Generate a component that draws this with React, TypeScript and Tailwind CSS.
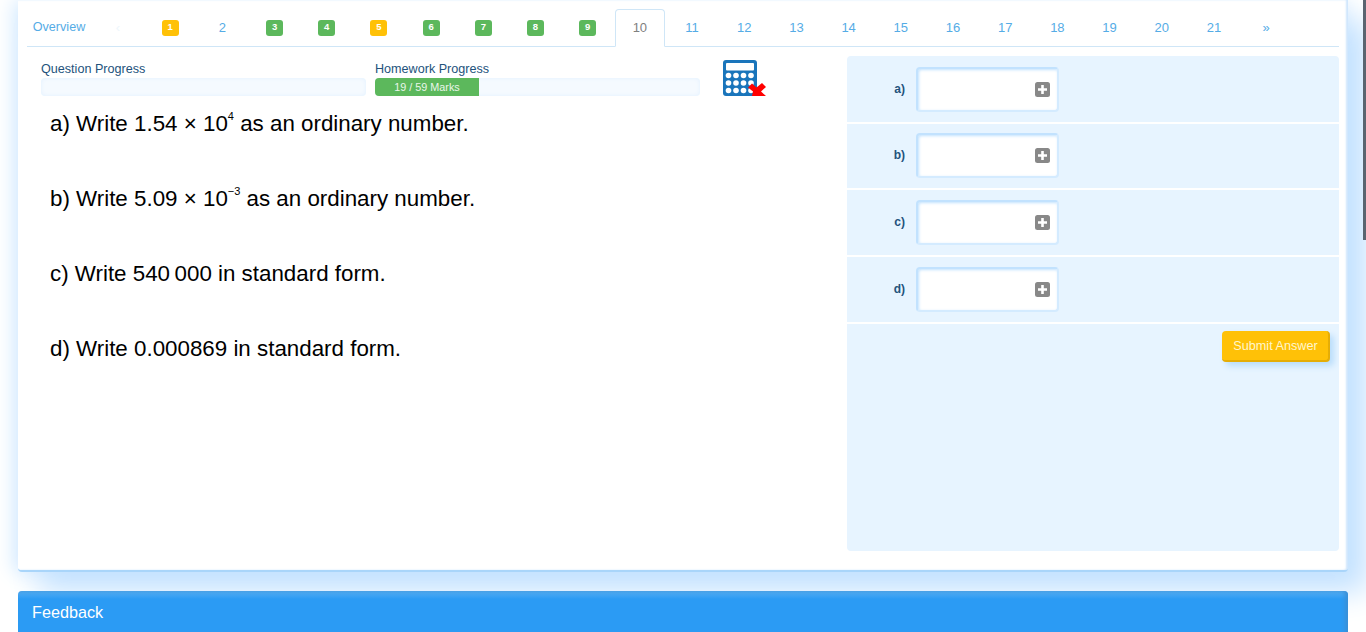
const tabs = [
  { label: "1", badge: "yellow" },
  { label: "2" },
  { label: "3", badge: "green" },
  { label: "4", badge: "green" },
  { label: "5", badge: "yellow" },
  { label: "6", badge: "green" },
  { label: "7", badge: "green" },
  { label: "8", badge: "green" },
  { label: "9", badge: "green" },
  { label: "10", active: true },
  ...[11, 12, 13, 14, 15, 16, 17, 18, 19, 20, 21].map((n) => ({ label: String(n) })),
  { label: "»" },
];

const answers = [
  { label: "a)", row: "h-[68px] pt-[11px]" },
  { label: "b)", row: "h-[66px] pt-[9px]" },
  { label: "c)", row: "h-[67px] pt-[10px]" },
  { label: "d)", row: "h-[67px] pt-[10px]" },
];

function Tab({ tab }: { tab: { label: string; badge?: string; active?: boolean } }) {
  if (tab.active) {
    return (
      <div className="mr-[2.2px] -mb-px flex h-[38px] w-[50px] items-center justify-center rounded-t border border-[#cfe6f7] border-b-white bg-white text-[13px] text-[#808080]">
        {tab.label}
      </div>
    );
  }
  return (
    <div className="mr-[2.2px] flex h-[37px] w-[50px] items-center justify-center text-[13px] text-[#55ace6]">
      {tab.badge ? (
        <span
          className={
            "flex h-4 w-[17px] items-center justify-center rounded-[3px] text-[9.5px] font-bold text-white " +
            (tab.badge === "yellow" ? "bg-[#ffc107]" : "bg-[#5cb85c]")
          }
        >
          {tab.label}
        </span>
      ) : (
        tab.label
      )}
    </div>
  );
}

function Progress({ label, children }: { label: string; children?: React.ReactNode }) {
  return (
    <div className="mt-[3px] w-[325px]">
      <div className="h-[19px] text-[12.6px] leading-[21px] text-[#23527c]">{label}</div>
      <div className="h-[18px] overflow-hidden rounded bg-[#f5faff] shadow-[inset_0_0_4px_#e2f1ff]">{children}</div>
    </div>
  );
}

function CalculatorIcon() {
  return (
    <svg width="43" height="36" viewBox="0 0 43 36" className="block">
      <rect x="0" y="0" width="34" height="36" rx="3" fill="#1a75bb" />
      <rect x="3" y="3" width="28" height="7.5" rx="1" fill="#fff" />
      {[15.5, 23, 30.5].map((cy) =>
        [5.5, 13, 20.5, 28].map((cx) => <circle key={`${cx}-${cy}`} cx={cx} cy={cy} r="2.8" fill="#fff" />),
      )}
      <path d="M25 27.5 L29 23.5 L33.5 27.5 L39 23 L43 27 L38 31.5 L43 36 L29 36 L30 31.5 Z" fill="#f00" />
    </svg>
  );
}

function Question({ children }: { children: React.ReactNode }) {
  return <p className="h-[75px] text-[22.35px] leading-[30px] text-black">{children}</p>;
}

function Exp({ children }: { children: React.ReactNode }) {
  return <sup className="relative -top-[3px] align-super text-[11px] leading-none">{children}</sup>;
}

export default function App() {
  return (
    <div className="relative h-[632px] overflow-hidden bg-white font-['Liberation_Sans',Arial,sans-serif]">
      {/* scrollbar thumb */}
      <div className="absolute right-0 top-0 z-10 h-[240px] w-[3px] bg-[#5a6470]" />

      <div className="ml-[18px] h-[572px] w-[1330px] rounded-b border-b-2 border-[#a9d5fa] bg-white px-[9px] pt-[9px] shadow-[20px_20px_30px_#c4e2ff,-4px_0_20px_#d2e9ff,inset_-2px_0_2px_#cfe6fd]">
        <div className="flex h-[38px] items-start border-b border-[#cfe6f7]">
          <div className="mr-[2px] flex h-[37px] w-[64px] items-center justify-center text-[12.6px] text-[#55ace6]">
            Overview
          </div>
          <div className="mr-[2.2px] flex h-[37px] w-[50px] items-center justify-center text-[13px] text-[#eef6fc]">‹</div>
          {tabs.map((tab) => (
            <Tab key={tab.label} tab={tab} />
          ))}
        </div>

        <div className="flex pt-[9px]">
          <div className="w-[820px] pl-[14px]">
            <div className="flex items-start gap-[9px]">
              <Progress label="Question Progress" />
              <Progress label="Homework Progress">
                <div className="flex h-[18px] w-[104px] items-center justify-center bg-[#5cb85c] text-[10.8px] text-[#eaf6ea]">
                  19 / 59 Marks
                </div>
              </Progress>
              <div className="ml-[13.5px] mt-[4px]">
                <CalculatorIcon />
              </div>
            </div>
            <div className="pl-[9px] pt-[13px]">
              <Question>
                a) Write 1.54 × 10<Exp>4</Exp> as an ordinary number.
              </Question>
              <Question>
                b) Write 5.09 × 10<Exp>−3</Exp> as an ordinary number.
              </Question>
              <Question>c) Write 540{"\u2009"}000 in standard form.</Question>
              <Question>d) Write 0.000869 in standard form.</Question>
            </div>
          </div>

          <div className="flex h-[495px] w-[492px] flex-col overflow-hidden rounded bg-[#e7f4ff]">
            {answers.map((a) => (
              <div key={a.label} className={"flex shrink-0 items-start border-b-2 border-white " + a.row}>
                <div className="mt-[14px] w-[58px] text-right text-[12px] font-bold leading-4 text-[#23527c]">{a.label}</div>
                <div className="ml-[11px] flex h-[45px] w-[143px] items-center justify-end rounded-[4px] border-2 border-[#c2e2fe] border-b-[#d4ebff] border-r-[#d4ebff] bg-white pr-[7px] shadow-[inset_1px_1px_3px_#c2e2fe]">
                  <svg width="15" height="15" viewBox="0 0 15 15" className="block">
                    <rect width="15" height="15" rx="2.5" fill="#888" />
                    <path d="M7.5 3v9M3 7.5h9" stroke="#fff" strokeWidth="2.6" />
                  </svg>
                </div>
              </div>
            ))}
            <div className="flex justify-end pr-[9px] pt-[7px]">
              <button className="h-[31px] w-[108px] rounded border-b-2 border-r-2 border-[#e5ad06] bg-[#ffc107] pl-px pt-[3px] text-[12.7px] text-[#fff6cc] shadow-[4px_4px_6px_#b9ddfb]">
                Submit Answer
              </button>
            </div>
          </div>
        </div>
      </div>

      <div className="ml-[18px] mt-[19px] flex h-[60px] w-[1330px] items-start rounded-t bg-[linear-gradient(#56aef2,#2b9bf4_8px)] pl-[14px] pt-[11px] text-[16.2px] leading-5 text-white shadow-[inset_-3px_0_4px_#3a8fd6]">
        Feedback
      </div>
    </div>
  );
}
